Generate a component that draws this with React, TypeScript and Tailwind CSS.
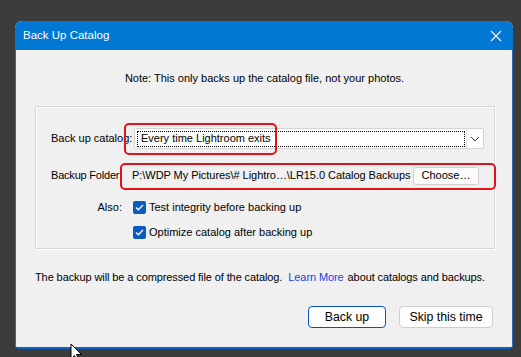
export default function App() {
  return (
    <div
      className="relative w-[521px] h-[357px] bg-[#3c3c3c] overflow-hidden pt-[21px] pl-[15px] text-[11px] text-black"
      style={{ fontFamily: '"Liberation Sans", Arial, sans-serif' }}
    >
      <div className="w-[498px] h-[328px] flex flex-col rounded-t-[7px] rounded-b-[4px] overflow-hidden bg-[#f0f0f0] border-b-[2px] border-[#0a64c8]">
        {/* Title bar */}
        <div className="h-[29px] shrink-0 bg-[#0078d4] flex items-center justify-between pl-[8px] pr-[10px] text-white">
          <span className="text-[11.5px] leading-none">Back Up Catalog</span>
          <svg width="12" height="12" viewBox="0 0 12 12" className="mr-[1px]">
            <path d="M1 1 L11 11 M11 1 L1 11" stroke="#ffffff" strokeWidth="1.1" />
          </svg>
        </div>
        {/* Body */}
        <div className="flex-1 flex flex-col border-x border-[#2f6fb8]">
          <div className="mt-[20px] h-[16px] leading-[16px] text-center pl-[1px]">
            Note: This only backs up the catalog file, not your photos.
          </div>

          {/* Group box */}
          <div className="relative ml-[19px] mt-[20px] w-[460px] border border-[#d6d6d6] shadow-[inset_1px_1px_0_#ffffff,1px_1px_0_#ffffff] pt-[21px] pb-[8px] pl-[15px]">
            {/* Row 1 */}
            <div className="flex items-center h-[21px]">
              <div className="w-[83px] whitespace-nowrap">Back up catalog:</div>
              <div className="w-[350px] h-[21px] bg-white border border-[#d4d4d4] rounded-[2px] flex items-center">
                <div className="ml-[2px] w-[328px] h-[16px] border border-dotted border-black flex items-center pl-[3px] leading-none">
                  Every time Lightroom exits
                </div>
                <div className="flex-1 h-full flex items-center justify-center border-l border-[#e6e6e6] ml-[1px]">
                  <svg width="10" height="6" viewBox="0 0 10 6">
                    <path d="M1 1 L5 5 L9 1" fill="none" stroke="#333" strokeWidth="1" />
                  </svg>
                </div>
              </div>
            </div>
            {/* Row 2 */}
            <div className="flex items-center h-[21px] mt-[16px]">
              <div className="w-[81px] whitespace-nowrap tracking-[-0.2px]">Backup Folder</div>
              <div className="w-[281px] whitespace-nowrap tracking-[-0.05px]">P:\WDP My Pictures\# Lightro…\LR15.0 Catalog Backups</div>
              <div className="w-[66px] h-[18px] bg-[#fbfbfb] border border-[#d0d0d0] rounded-[3px] flex items-center justify-center leading-none">
                Choose…
              </div>
            </div>
            {/* Row 3 */}
            <div className="flex items-center h-[16px] mt-[13px]">
              <div className="w-[82px] text-right pr-[11px]">Also:</div>
              <Check />
              <span className="ml-[3px] whitespace-nowrap">Test integrity before backing up</span>
            </div>
            {/* Row 4 */}
            <div className="flex items-center h-[16px] mt-[9px]">
              <div className="w-[82px]" />
              <Check />
              <span className="ml-[3px] whitespace-nowrap">Optimize catalog after backing up</span>
            </div>

            {/* Red annotation boxes */}
            <div className="absolute left-[88px] top-[16px] w-[153px] h-[32px] border-[2px] border-[#e0131b] rounded-[5px]" />
            <div className="absolute left-[84px] top-[56px] w-[376px] h-[27px] border-[2px] border-[#e0131b] rounded-[5px]" />
          </div>

          {/* Bottom text */}
          <div className="ml-[19px] mt-[20px] h-[16px] leading-[16px] whitespace-nowrap tracking-[-0.1px]">
            The backup will be a compressed file of the catalog.
            <span className="text-[#1a3fe0] ml-[6px] mr-[4px]">Learn More</span>
            about catalogs and backups.
          </div>

          {/* Buttons */}
          <div className="flex justify-end gap-[13px] mt-[21px] mr-[19px]">
            <div className="w-[78px] h-[22px] bg-[#fdfdfd] border-[1.5px] border-[#0a50c0] rounded-[4px] flex items-center justify-center text-[12.3px]">
              Back up
            </div>
            <div className="w-[94px] h-[22px] bg-[#fdfdfd] border border-[#cfcfcf] rounded-[4px] flex items-center justify-center text-[12.3px]">
              Skip this time
            </div>
          </div>
        </div>
      </div>

      {/* Mouse cursor */}
      <svg className="absolute left-[70px] top-[343px]" width="14" height="20" viewBox="0 0 14 20">
        <path d="M1 1 L1 16 L4.5 12.5 L7 18 L9 17 L6.5 11.5 L11.5 11.5 Z" fill="#ffffff" stroke="#000000" strokeWidth="1" />
      </svg>
    </div>
  );
}

function Check() {
  return (
    <div className="w-[13px] h-[13px] rounded-[2px] bg-[#0a5cc2] flex items-center justify-center shrink-0">
      <svg width="9" height="7" viewBox="0 0 9 7">
        <path d="M1 3.5 L3.3 5.8 L8 1" fill="none" stroke="#ffffff" strokeWidth="1.3" />
      </svg>
    </div>
  );
}
